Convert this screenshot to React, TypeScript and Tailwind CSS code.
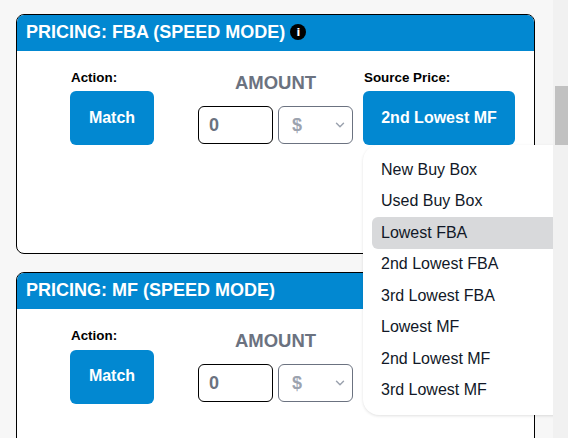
import { ChevronDown } from 'lucide-react';

const sans = 'font-["Liberation_Sans",Arial,sans-serif]';

const sourceOptions = [
  'New Buy Box',
  'Used Buy Box',
  'Lowest FBA',
  '2nd Lowest FBA',
  '3rd Lowest FBA',
  'Lowest MF',
  '2nd Lowest MF',
  '3rd Lowest MF',
];

function PricingCard({ title, info, source, lowered }: { title: string; info?: boolean; source?: string; lowered?: boolean }) {
  return (
    <section className="h-[240px] shrink-0 overflow-hidden rounded-lg border border-black bg-white">
      <header className="flex h-9 items-center gap-[5px] bg-[#0288d1] pb-[2px] pl-[9px] text-[18px] font-bold text-white">
        <span>{title}</span>
        {info && (
          <span className="flex size-4 items-center justify-center rounded-full bg-black font-['DejaVu_Sans',sans-serif] text-[11px] leading-none font-bold text-white">
            i
          </span>
        )}
      </header>
      <div className="flex pt-[17px] pl-[53px]">
        <div className="w-[84px]">
          <div className={`text-[13.4px] leading-[20px] font-bold text-black ${lowered ? 'h-[24px]' : 'h-[23px]'}`}>
            <span className="pl-px">Action:</span>
          </div>
          <button className={`h-[54px] w-[84px] rounded-md bg-[#0288d1] text-[16px] font-bold text-white ${lowered ? 'pb-[2px]' : ''}`}>
            Match
          </button>
        </div>
        <div className="ml-[44px] w-[155px]">
          <div className="h-[38px] pt-[3px] text-center text-[18.5px] leading-[24px] font-bold text-[#6b7280]">AMOUNT</div>
          <div className="flex gap-[5px]">
            <div className="flex h-[38px] w-[75px] items-center rounded-md border border-black bg-white pl-[10px] text-[18px] font-bold text-[#6b7280]">
              0
            </div>
            <div className="flex h-[38px] w-[75px] items-center justify-between rounded-md border border-[#6b7280] bg-white pr-[5px] pl-[13px] text-[18px] font-bold text-[#9ca3af]">
              <span>$</span>
              <ChevronDown className="size-[14px] text-[#9ca3af]" strokeWidth={2.5} />
            </div>
          </div>
        </div>
        {source && (
          <div className="ml-[10px] w-[152px]">
            <div className="h-[23px] text-[13.4px] leading-[20px] font-bold text-black">
              <span className="pl-px">Source Price:</span>
            </div>
            <button className="h-[54px] w-[152px] rounded-md bg-[#0288d1] text-[16px] font-bold text-white">{source}</button>
          </div>
        )}
      </div>
    </section>
  );
}

export default function App() {
  return (
    <div className={`flex h-[438px] w-[568px] overflow-hidden bg-[#f7f7f7] ${sans}`}>
      <main className="relative flex min-w-0 flex-1 flex-col gap-[18px] overflow-hidden pt-[14px] pr-[18px] pl-4">
        <PricingCard title="PRICING: FBA (SPEED MODE)" info source="2nd Lowest MF" />
        <PricingCard title="PRICING: MF (SPEED MODE)" lowered />
        <ul className="absolute top-[145px] left-[363px] h-[270px] w-[230px] rounded-2xl bg-white py-[9px] pl-[9px] text-[16px] text-[#111827] shadow-[0_1px_3px_rgba(0,0,0,0.12)]">
          {sourceOptions.map((option) => (
            <li
              key={option}
              className={`flex h-[31.5px] items-center rounded-md pl-[9px] ${option === 'Lowest FBA' ? 'bg-[#d8d9db]' : ''}`}
            >
              {option}
            </li>
          ))}
        </ul>
      </main>
      <div className="flex w-[15px] shrink-0 flex-col bg-[#f1f1f1] pt-[86px]">
        <div className="ml-[2px] h-[59px] bg-[#c1c1c1]" />
      </div>
    </div>
  );
}
